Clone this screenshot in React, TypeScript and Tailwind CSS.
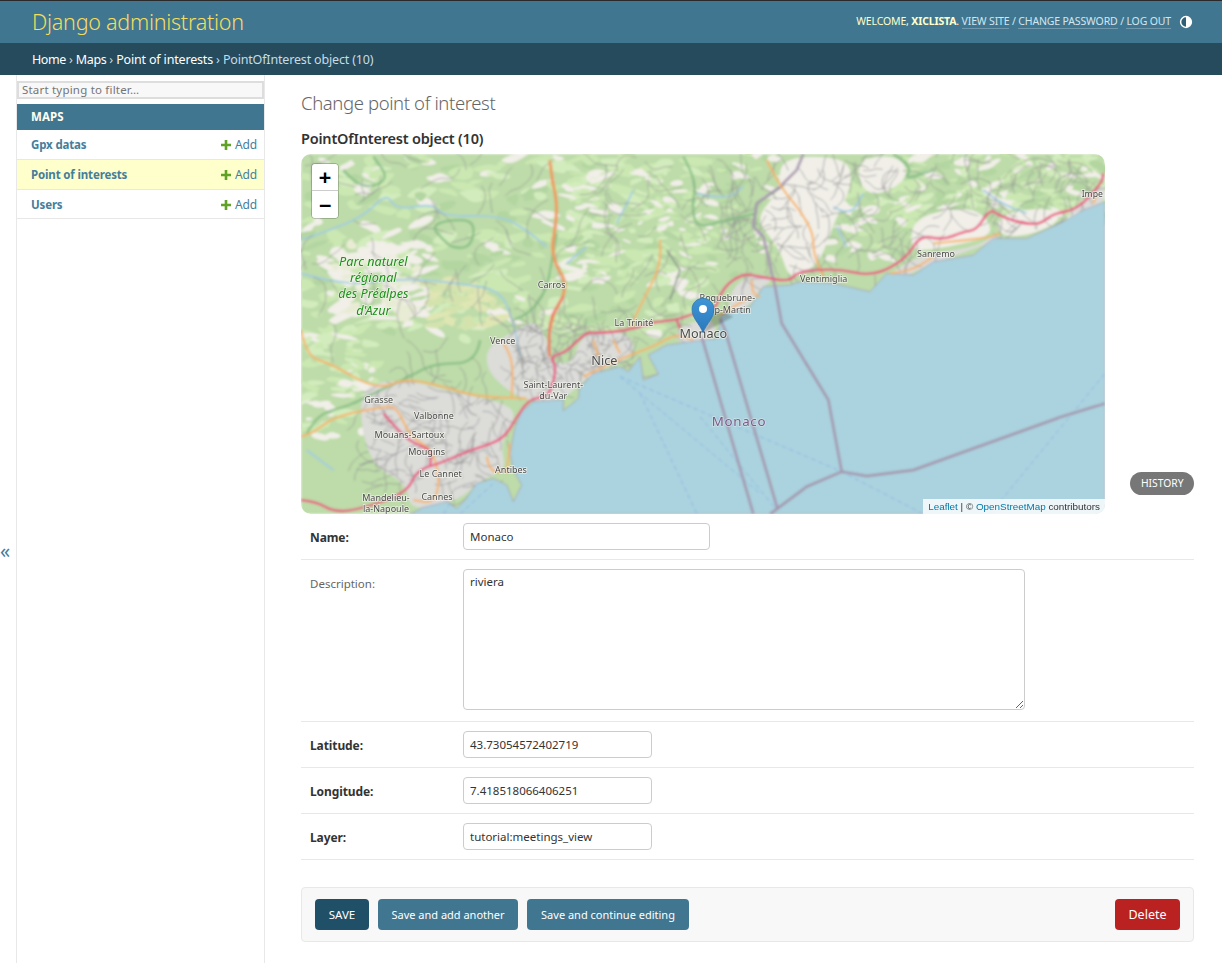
import React from "react";

function rng(seed: number) {
  let a = seed;
  return () => {
    a |= 0; a = (a + 0x6d2b79f5) | 0;
    let t = Math.imul(a ^ (a >>> 15), 1 | a);
    t = (t + Math.imul(t ^ (t >>> 7), 61 | t)) ^ t;
    return ((t ^ (t >>> 14)) >>> 0) / 4294967296;
  };
}

// turns "M1 2L3 4L5 6" polylines into rounded curves
function smooth(d: string) {
  return d
    .split("M")
    .filter(Boolean)
    .map((sub) => {
      const closed = sub.trim().endsWith("Z");
      const pts = sub.replace("Z", "").split("L").map((p) => p.trim().split(" ").map(Number));
      if (pts.length < 3) return "M" + sub;
      let out = closed
        ? `M${(pts[0][0] + pts[pts.length - 1][0]) / 2} ${(pts[0][1] + pts[pts.length - 1][1]) / 2}`
        : `M${pts[0][0]} ${pts[0][1]}`;
      const last = closed ? pts.length : pts.length - 1;
      for (let i = closed ? 0 : 1; i < last; i++) {
        const n = pts[(i + 1) % pts.length];
        out += `Q${pts[i][0]} ${pts[i][1]} ${(pts[i][0] + n[0]) / 2} ${(pts[i][1] + n[1]) / 2}`;
      }
      if (!closed) out += `L${pts[pts.length - 1][0]} ${pts[pts.length - 1][1]}`;
      return out + (closed ? "Z" : "");
    })
    .join("");
}

type Region = { x: number; y: number; w: number; h: number; n: number; colors: string[]; size: number };

const patchRegions: Region[] = [
  { x: 0, y: 12, w: 1200, h: 560, n: 300, colors: ["#cbe8b2", "#cbe8b2", "#d3ecbd", "#f1efe8", "#b3d6a1"], size: 30 },
  { x: 60, y: 280, w: 330, h: 230, n: 70, colors: ["#f1efe8", "#f1efe8", "#e8ecd4"], size: 30 },
  { x: 380, y: 400, w: 220, h: 130, n: 36, colors: ["#dfe6b4", "#d4e3ae"], size: 26 },
  { x: 0, y: 560, w: 230, h: 300, n: 70, colors: ["#cbe8b2", "#f1efe8", "#d3ecbd"], size: 22 },
  { x: 800, y: 60, w: 420, h: 340, n: 130, colors: ["#cbe8b2", "#f1efe8", "#d3ecbd"], size: 18 },
  { x: 1200, y: 12, w: 260, h: 400, n: 70, colors: ["#cbe8b2", "#f1efe8", "#b3d6a1"], size: 18 },
  { x: 1700, y: 12, w: 720, h: 190, n: 170, colors: ["#cbe8b2", "#d3ecbd", "#f1efe8", "#b3d6a1"], size: 24 },
  { x: 1560, y: 60, w: 300, h: 280, n: 70, colors: ["#b6d8a4", "#cbe8b2", "#f1efe8"], size: 26 },
];

function buildPatches() {
  const r = rng(42);
  const out: { d: string; c: string }[] = [];
  for (const g of patchRegions) {
    for (let i = 0; i < g.n; i++) {
      const cx = g.x + r() * g.w;
      const cy = g.y + r() * g.h;
      const rot = (r() - 0.5) * 1.0;
      const rx = g.size * (0.5 + r() * 1.3);
      const ry = g.size * (0.25 + r() * 0.4);
      const pts: string[] = [];
      const k = 8;
      for (let j = 0; j < k; j++) {
        const a = (j / k) * Math.PI * 2;
        const m = 0.55 + r() * 0.8;
        const px = Math.cos(a) * rx * m;
        const py = Math.sin(a) * ry * m;
        pts.push(`${(cx + px * Math.cos(rot) - py * Math.sin(rot)).toFixed(0)} ${(cy + px * Math.sin(rot) + py * Math.cos(rot)).toFixed(0)}`);
      }
      out.push({ d: smooth("M" + pts.join("L") + "Z"), c: g.colors[Math.floor(r() * g.colors.length)] });
    }
  }
  return out;
}

const lineRegions = [
  { x: 0, y: 12, w: 1250, h: 560, n: 110, step: 24 },
  { x: 190, y: 690, w: 440, h: 350, n: 120, step: 18 },
  { x: 640, y: 520, w: 380, h: 210, n: 150, step: 13 },
  { x: 1280, y: 20, w: 620, h: 360, n: 130, step: 20 },
  { x: 1900, y: 20, w: 500, h: 230, n: 80, step: 20 },
];

function buildLines() {
  const r = rng(7);
  const out: string[] = [];
  for (const g of lineRegions) {
    for (let i = 0; i < g.n; i++) {
      let x = g.x + r() * g.w;
      let y = g.y + r() * g.h;
      let a = r() * Math.PI * 2;
      const pts = [`${x.toFixed(0)} ${y.toFixed(0)}`];
      const steps = 3 + Math.floor(r() * 4);
      for (let j = 0; j < steps; j++) {
        a += (r() - 0.5) * 1.6;
        x += Math.cos(a) * g.step;
        y += Math.sin(a) * g.step;
        pts.push(`${x.toFixed(0)} ${y.toFixed(0)}`);
      }
      out.push(smooth("M" + pts.join("L")));
    }
  }
  return out;
}

const patches = buildPatches();
const greyLines = buildLines();

const sea =
  "M330 1092L370 1072L440 1055L470 1075L495 1050L530 1000L580 985L620 1005L640 1055L665 1005L640 960L630 910L645 830L665 785L700 755L790 748L790 782L835 745L838 715L880 670L960 650L985 665L1020 620L1030 690L1075 672L1045 615L1100 585L1170 575L1250 565L1265 495L1350 470L1390 410L1470 405L1500 395L1600 400L1710 425L1760 370L1840 375L1900 335L2020 315L2080 265L2180 265L2280 220L2350 180L2415 155L2415 1092Z";

const urban = [
  "M190 700L330 690L470 730L620 760L650 800L600 880L620 960L540 990L480 1050L330 1085L320 1000L220 950L180 820Z",
  "M560 590L650 540L700 510L740 560L750 640L820 640L840 560L920 540L1000 560L1000 620L900 660L840 700L790 750L690 755L620 720L560 660Z",
  "M1130 530L1240 500L1250 570L1130 585Z",
  "M1300 400L1380 370L1420 390L1380 415L1350 470L1280 490Z",
  "M1730 400L1830 330L1900 310L2030 290L2090 250L2100 268L1900 340L1800 385L1720 425Z",
  "M2290 200L2400 110L2415 110L2415 160L2320 190Z",
];

const cream = [
  "M1440 20L1640 20L1660 100L1600 220L1560 340L1470 395L1440 300L1400 250L1370 200L1440 120Z",
  "M1840 200L2000 170L2060 200L2080 260L1900 300L1830 300Z",
  "M2100 190L2250 170L2290 210L2180 260L2090 255Z",
  "M1660 30L1800 12L1830 90L1700 150Z",
];

const pink = [
  "M3 1050L50 1055L100 1085L170 1080L320 1030L350 960L420 940L510 900L610 870L650 800L690 745L750 740L770 650L750 620L800 605L860 545L890 550L990 540L1060 515L1130 510L1180 490L1240 490L1270 410L1330 370L1380 380L1470 395L1490 365L1610 355L1720 380L1820 325L1860 255L1930 270L1990 245L2030 240L2070 175L2100 200L2210 230L2260 190L2330 180L2405 100L2410 70",
  "M250 790L285 830L330 875L395 900L390 950",
  "M1130 510L1140 535",
];
const orange = [
  "M3 540L20 620L90 640L230 720L320 685L430 710L530 740L680 745",
  "M610 580L640 620L635 740",
  "M3 860L40 850L100 800L250 770L290 770L330 860L400 900L420 1000L400 1060L340 1050",
  "M1080 270L1085 340L1040 430L1010 490L990 540",
  "M850 680L960 625L1060 590L1130 550L1180 570",
  "M880 570L895 620",
  "M940 570L960 610",
  "M1355 390L1355 430L1380 440",
  "M1400 30L1440 110L1500 180L1540 250L1540 310L1570 380",
  "M560 920L570 970L620 960",
  "M630 880L620 970",
  "M1770 370L1830 365L1900 320",
  "M1900 280L2060 265L2100 250",
  "M2380 160L2390 130",
  "M1260 495L1350 440",
];
const varRoad = "M750 620L740 520L810 410L750 320L775 180L755 80L750 30";
const greenBoundary = [
  "M130 60L180 120L270 90L220 20",
  "M395 230L440 210L525 210L515 290L460 295L430 270Z",
  "M640 510L730 480L770 250",
  "M540 570L530 640L400 640L330 680L220 730L140 770L60 790L20 850",
  "M1150 20L1190 90L1175 170L1190 235L1280 210L1370 190",
  "M1780 12L1840 50L1810 90L1900 60",
];
const maritime = [
  "M1205 560L1360 1092",
  "M1260 505L1275 540L1432 1075",
  "M1425 410L1445 520L1585 750L1625 965L1520 1010L1410 1092",
  "M1625 965L1700 978L1840 960L2285 800L2415 760",
];
const landBorder = "M1510 12L1490 60L1440 110L1370 160L1360 230L1390 260L1425 410";
const dashes = [
  "M960 680L1240 800L1625 965L1870 1092",
  "M960 680L1380 1030M1020 730L1190 1090",
  "M2070 1092L2415 670",
  "M1200 800L1430 1080",
  "M430 1092L450 1060M480 1092L580 1000",
];
const rivers = [
  "M3 270L120 230L200 190L260 130L290 180L400 160L430 200L600 195L680 240L740 290",
  "M3 370L100 395L180 400L320 385L480 400L600 420L640 510L660 620",
  "M800 340L860 290",
  "M950 220L1000 120",
  "M1190 130L1280 150L1330 110",
  "M1600 170L1650 200L1690 130",
  "M1610 230L1640 290",
  "M2050 120L2100 160L2180 190",
  "M20 900L100 960",
];

type L = [string, number, number, number?];
const cityLabels: L[] = [
  ["Carros", 755, 414, 27],
  ["Vence", 608, 582, 27],
  ["Saint-Laurent-", 760, 713, 27],
  ["du-Var", 760, 747, 27],
  ["La Trinité", 1002, 528, 27],
  ["Roquebrune-", 1282, 454, 27],
  ["Cap-Martin", 1282, 488, 27],
  ["Grasse", 236, 758, 27],
  ["Valbonne", 402, 806, 27],
  ["Mouans-Sartoux", 328, 863, 27],
  ["Mougins", 380, 916, 27],
  ["Le Cannet", 422, 981, 27],
  ["Antibes", 633, 968, 27],
  ["Mandelieu-", 258, 1052, 27],
  ["la-Napoule", 258, 1086, 27],
  ["Cannes", 411, 1049, 27],
  ["Nice", 913, 645, 38],
  ["Monaco", 1210, 564, 38],
  ["Ventimiglia", 1571, 397, 27],
  ["Sanremo", 1908, 320, 27],
];

function MapDrawing() {
  return (
    <svg viewBox="3 12 2412 1080" className="block w-full h-full" preserveAspectRatio="none" style={{ fontFamily: "'Noto Sans', sans-serif" }}>
      <defs>
        <filter id="soft" x="0" y="0" width="100%" height="100%">
          <feGaussianBlur stdDeviation="2.6" />
        </filter>
        <filter id="softText" x="-5%" y="-5%" width="110%" height="110%">
          <feGaussianBlur stdDeviation="0.9" />
        </filter>
        <linearGradient id="pin" x1="0" y1="0" x2="0" y2="1">
          <stop offset="0" stopColor="#3f95d6" />
          <stop offset="1" stopColor="#2a78bd" />
        </linearGradient>
      </defs>
      <g filter="url(#soft)">
        <rect x="3" y="12" width="2412" height="1080" fill="#bddca9" />
        {patches.map((p, i) => <path key={i} d={p.d} fill={p.c} />)}
        {cream.map((d, i) => <path key={i} d={smooth(d)} fill="#f1efe8" />)}
        {urban.map((d, i) => <path key={i} d={smooth(d)} fill="#dcdcd9" />)}
        {rivers.map((d, i) => <path key={i} d={smooth(d)} fill="none" stroke="#a0cde4" strokeWidth="5" />)}
        {greyLines.map((d, i) => <path key={i} d={d} fill="none" stroke="#949494" strokeWidth="2.8" opacity="0.75" />)}
        {greenBoundary.map((d, i) => <path key={i} d={smooth(d)} fill="none" stroke="#80b880" strokeWidth="7" strokeOpacity="0.8" />)}
        <path d="M1450 105L1370 160L1360 230" fill="none" stroke="#7d8f7d" strokeWidth="8" />
        <path d={sea} fill="#aad3df" />
        <path d={sea} fill="none" stroke="#a08aa8" strokeWidth="3" opacity="0.6" />
        {dashes.map((d, i) => <path key={i} d={d} fill="none" stroke="#93b6e8" strokeWidth="3" strokeDasharray="14 10" />)}
        {maritime.map((d, i) => <path key={i} d={d} fill="none" stroke="#a392ab" strokeWidth="8" strokeOpacity="0.9" />)}
        <path d={landBorder} fill="none" stroke="#a99bb0" strokeWidth="8" />
        <path d="M1100 300L1140 360L1110 450" fill="none" stroke="#7d8a80" strokeWidth="4" />
        {orange.map((d, i) => <path key={i} d={smooth(d)} fill="none" stroke="#f7b36a" strokeWidth="6" />)}
        <path d={smooth(varRoad)} fill="none" stroke="#ee9a5e" strokeWidth="9" />
        <path d={smooth("M750 620L740 520L790 440")} fill="none" stroke="#ea7a6c" strokeWidth="6" />
        {pink.map((d, i) => <path key={i} d={smooth(d)} fill="none" stroke="#e85c80" strokeWidth="7" />)}
      </g>
      <g filter="url(#softText)">
        <g textAnchor="middle" fontStyle="italic" fontSize="38" fill="#1e8f1e" stroke="#eef3e2" strokeWidth="4" paintOrder="stroke">
          <text x="220" y="348">Parc naturel</text>
          <text x="220" y="397">régional</text>
          <text x="220" y="445">des Préalpes</text>
          <text x="220" y="494">d'Azur</text>
        </g>
        <g textAnchor="middle" fill="#4a4a4a" stroke="#f5f5f0" strokeWidth="5" strokeOpacity="0.75" paintOrder="stroke">
          {cityLabels.map(([t, x, y, s], i) => (
            <text key={i} x={x} y={y} fontSize={s}>{t}</text>
          ))}
        </g>
        <text x="1317" y="827" textAnchor="middle" fontSize="40" letterSpacing="2" fill="#7b5b88" stroke="#dfe9ee" strokeWidth="4" strokeOpacity="0.7" paintOrder="stroke">Monaco</text>
        <text x="2345" y="142" fontSize="26" fill="#4a4a4a" stroke="#f5f5f0" strokeWidth="5" strokeOpacity="0.75" paintOrder="stroke">Impe</text>
      </g>
      <path d="M1209 548L1300 500L1275 488L1240 490Z" fill="#000" opacity="0.22" filter="url(#soft)" />
      <path d="M1209 548C1198 520 1176 505 1176 478C1176 459 1191 445 1209 445C1227 445 1242 459 1242 478C1242 505 1220 520 1209 548Z" fill="url(#pin)" stroke="#2a6fa8" strokeWidth="2" />
      <circle cx="1209" cy="477" r="12" fill="#fff" />
    </svg>
  );
}

function Plus() {
  return (
    <svg width="10" height="10" viewBox="0 0 10 10" className="shrink-0" aria-hidden="true">
      <path d="M3.7 0H6.3V3.7H10V6.3H6.3V10H3.7V6.3H0V3.7H3.7Z" fill="#5fa225" />
    </svg>
  );
}

function SideRow({ label, selected, heightClass }: { label: string; selected?: boolean; heightClass: string }) {
  return (
    <div className={`flex items-center justify-between pl-[14px] pr-[7px] border-b border-[#e8e8e8] ${heightClass} ${selected ? "bg-[#ffffcc]" : "bg-white"}`}>
      <span className="text-[11.5px] font-bold text-[#447e9b] tracking-[-0.15px]">{label}</span>
      <span className="flex items-center gap-[4px] text-[12px] text-[#447e9b] tracking-[-0.15px]">
        <Plus />
        Add
      </span>
    </div>
  );
}

function FieldRow({ label, value, inputClass }: { label: string; value: string; inputClass: string }) {
  return (
    <div className="flex h-[46px] items-start border-b border-[#e8e8e8] pl-[9px] pt-[9px]">
      <label className="w-[153px] shrink-0 pt-[8px] text-[12px] font-bold leading-[14px] tracking-[-0.1px] text-[#333333]">{label}</label>
      <input
        readOnly
        value={value}
        className={`h-[27px] rounded-[4px] border border-[#cccccc] bg-white px-[6px] text-[11.5px] text-[#333333] outline-none ${inputClass}`}
      />
    </div>
  );
}

export default function App() {
  return (
    <div className="flex h-screen w-full flex-col overflow-hidden bg-white font-['Noto_Sans',sans-serif] text-[#333333]">
      <header className="flex h-[43px] shrink-0 items-center justify-between border-t border-[#2a2a2a] bg-[#417690] pl-[32px] pr-[29px]">
        <h1 className="text-[21.5px] font-light leading-none text-[#f5dd5d] tracking-[-0.25px]">Django administration</h1>
        <div className="flex items-center text-[10.5px] uppercase text-[#ffffcc] tracking-[-0.15px]">
          <span>Welcome,&nbsp;<strong className="font-bold">xiclista</strong>.&nbsp;</span>
          <a className="border-b border-white/25 text-[#d3e6ef] leading-[13px]">View site</a>
          <span className="text-[#d3e6ef]">&nbsp;/&nbsp;</span>
          <a className="border-b border-white/25 text-[#d3e6ef] leading-[13px]">Change password</a>
          <span className="text-[#d3e6ef]">&nbsp;/&nbsp;</span>
          <a className="border-b border-white/25 text-[#d3e6ef] leading-[13px]">Log out</a>
          <svg width="14" height="14" viewBox="0 0 14 14" className="ml-[8px]" aria-hidden="true">
            <circle cx="7" cy="7" r="5.4" fill="#2f5f78" stroke="#ffffff" strokeWidth="1.5" />
            <path d="M7 1.6A5.4 5.4 0 0 1 7 12.4Z" fill="#ffffff" />
          </svg>
        </div>
      </header>

      <nav className="flex h-[32px] shrink-0 items-center bg-[#264b5d] pl-[32px] pt-[2px] text-[12.5px] text-[#c4dce8] tracking-[-0.17px]">
        <a className="text-white tracking-[-0.4px]">Home</a>
        <span>&nbsp;›&nbsp;</span>
        <a className="text-white tracking-[-0.4px]">Maps</a>
        <span>&nbsp;›&nbsp;</span>
        <a className="text-white">Point of interests</a>
        <span>&nbsp;›&nbsp;PointOfInterest object (10)</span>
      </nav>

      <div className="flex min-h-0 flex-1">
        <div className="flex w-[17px] shrink-0 items-center justify-center border-r border-[#e8e8e8] pt-[64px] pr-[6px] text-[20px] text-[#447e9b]">«</div>

        <aside className="flex w-[248px] shrink-0 flex-col border-r border-[#e8e8e8] pt-[6px]">
          <input
            readOnly
            placeholder="Start typing to filter…"
            className="mb-[5px] h-[18px] w-full border-2 border-[#dddddd] bg-[#f8f8f8] px-[3px] pb-[1px] text-[11.5px] text-[#666666] outline-none placeholder:text-[#757575] tracking-[0.2px]"
          />
          <div className="flex h-[26px] items-center bg-[#417690] pl-[14px] text-[11.5px] font-bold uppercase text-[#fffff0] tracking-[0.1px]">Maps</div>
          <SideRow label="Gpx datas" heightClass="h-[30px]" />
          <SideRow label="Point of interests" selected heightClass="h-[30px]" />
          <SideRow label="Users" heightClass="h-[29px] pt-[1px]" />
        </aside>

        <main className="min-w-0 flex-1 pl-[36px] pr-[28px] pt-[16px]">
          <h1 className="text-[18.5px] font-light leading-[24px] tracking-[-0.38px] text-[#666666]">Change point of interest</h1>
          <h2 className="mt-[12px] text-[14.5px] font-semibold leading-[22px] tracking-[-0.2px] text-[#333333]">PointOfInterest object (10)</h2>

          <div className="mt-[5px] flex items-end justify-between">
            <div className="relative h-[360px] w-[804px] overflow-hidden rounded-[10px]">
              <MapDrawing />
              <div className="absolute left-[10px] top-[9px] flex flex-col overflow-hidden rounded-[4px] border border-black/20 bg-clip-padding font-['DejaVu_Sans_Mono',monospace] text-[20px] font-bold text-black">
                <span className="flex h-[27px] w-[26px] items-center justify-center border-b border-[#cccccc] bg-white leading-none">+</span>
                <span className="flex h-[27px] w-[26px] items-center justify-center bg-white leading-none">−</span>
              </div>
              <div className="absolute bottom-0 right-0 bg-white/80 px-[5px] font-['Liberation_Sans',sans-serif] text-[9.9px] leading-[15px] text-[#333333]">
                <span className="text-[#0078a8]">Leaflet</span> | © <span className="text-[#0078a8]">OpenStreetMap</span> contributors
              </div>
            </div>
            <a className="mb-[19px] flex h-[23px] items-center rounded-[12px] bg-[#777777] px-[10.5px] text-[10.3px] uppercase text-white">History</a>
          </div>

          <FieldRow label="Name:" value="Monaco" inputClass="w-[247px]" />

          <div className="flex h-[162px] items-start border-b border-[#e8e8e8] pl-[9px] pt-[9px]">
            <label className="w-[153px] shrink-0 pt-[8px] text-[11.5px] leading-[14px] text-[#666666]">Description:</label>
            <textarea
              readOnly
              value="riviera"
              className="h-[141px] w-[562px] rounded-[4px] border border-[#cccccc] bg-white px-[6px] py-[4px] text-[11.5px] leading-[16px] text-[#333333] outline-none"
            />
          </div>

          <FieldRow label="Latitude:" value="43.73054572402719" inputClass="w-[189px]" />
          <FieldRow label="Longitude:" value="7.418518066406251" inputClass="w-[189px]" />
          <FieldRow label="Layer:" value="tutorial:meetings_view" inputClass="w-[189px]" />

          <div className="mt-[27px] flex h-[55px] items-center rounded-[4px] border border-[#e8e8e8] bg-[#f8f8f8] px-[13px] text-[11px] text-white">
            <button className="h-[31px] w-[54px] rounded-[4px] bg-[#205067] pt-[1px] text-[11.5px] uppercase">Save</button>
            <button className="ml-[9px] h-[31px] w-[140px] rounded-[4px] bg-[#417690] pt-[1px]">Save and add another</button>
            <button className="ml-[9px] h-[31px] w-[162px] rounded-[4px] bg-[#417690] pt-[1px]">Save and continue editing</button>
            <button className="ml-auto h-[31px] w-[65px] rounded-[4px] bg-[#ba2121] pt-[1px] text-[12.5px]">Delete</button>
          </div>
        </main>
      </div>
    </div>
  );
}
